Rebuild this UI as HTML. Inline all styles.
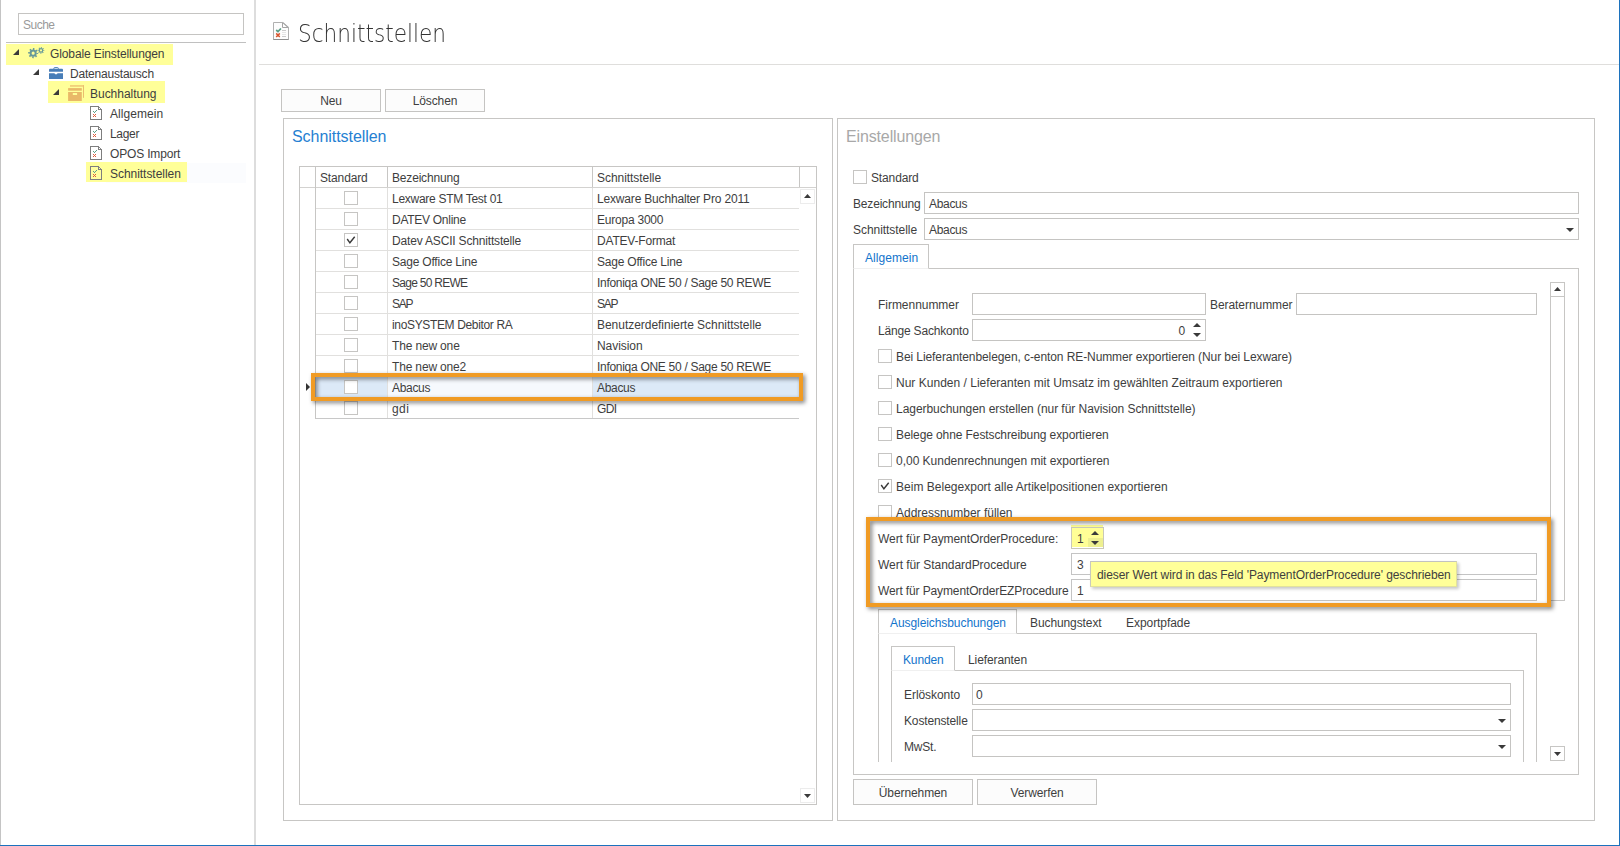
<!DOCTYPE html>
<html lang="de">
<head>
<meta charset="utf-8">
<title>Schnittstellen</title>
<style>
html,body{margin:0;padding:0;}
body{width:1620px;height:846px;overflow:hidden;background:#fff;position:relative;
  font-family:"Liberation Sans",sans-serif;font-size:12px;color:#333;}
#app{position:absolute;left:0;top:0;width:1620px;height:846px;overflow:hidden;background:#fff;}
#app *{box-sizing:border-box;}
.a{position:absolute;}
.t{position:absolute;white-space:nowrap;line-height:16px;height:16px;font-size:12px;color:#3e3e3e;letter-spacing:-0.1px;}
.ln{position:absolute;background:#c7c6c4;}
.rl{left:316px;width:483px;height:1px;background:#e1e0de;}
.box{position:absolute;border:1px solid #c7c6c4;background:#fff;}
.inp{position:absolute;border:1px solid #c5c4c2;background:#fff;height:22px;}
.btn{position:absolute;border:1px solid #c5c4c2;background:#fcfcfc;height:23px;text-align:center;line-height:23px;font-size:12px;color:#3e3e3e;letter-spacing:-0.1px;}
.cb{position:absolute;width:14px;height:14px;border:1px solid #c6c5c3;background:#fff;}
.hl{position:absolute;background:#ffff99;}
.blue{color:#1274cc;}
svg{position:absolute;overflow:visible;}
.tri{position:absolute;width:0;height:0;}
.frame{position:absolute;border:4px solid #f09b24;filter:drop-shadow(2px 2px 2px rgba(0,0,0,0.5));}
</style>
</head>
<body>
<div id="app">

<!-- ===== window edges ===== -->
<div class="a" style="left:0;top:0;width:1px;height:846px;background:#c4c4c4;"></div>
<div class="a" style="left:1619px;top:0;width:1px;height:846px;background:#1c72bd;"></div>
<div class="a" style="left:0;top:845px;width:1620px;height:1px;background:#1c72bd;"></div>

<!-- ===== left navigation ===== -->
<div id="nav">
  <div class="inp" style="left:18px;top:13px;width:226px;height:22px;"></div>
  <div class="t" style="left:23px;top:17px;color:#9a9a9a;letter-spacing:-0.506px;">Suche</div>
  <div class="ln" style="left:6px;top:42px;width:240px;height:1px;background:#c0c0c0;"></div>

  <div class="hl" style="left:6px;top:44px;width:167px;height:21px;"></div>
  <div class="hl" style="left:48px;top:81px;width:117px;height:22px;"></div>
  <div class="a" style="left:106px;top:163px;width:140px;height:20px;background:#fbfcfe;"></div>
  <div class="hl" style="left:86px;top:162px;width:101px;height:20px;"></div>

  <!-- expander arrows -->
  <svg style="left:13px;top:49px;" width="6" height="6" viewBox="0 0 6 6"><path d="M6 0 L6 6 L0 6 Z" fill="#3a3a3a"/></svg>
  <svg style="left:33px;top:69px;" width="6" height="6" viewBox="0 0 6 6"><path d="M6 0 L6 6 L0 6 Z" fill="#3a3a3a"/></svg>
  <svg style="left:53px;top:89px;" width="6" height="6" viewBox="0 0 6 6"><path d="M6 0 L6 6 L0 6 Z" fill="#3a3a3a"/></svg>

  <!-- gears icon -->
  <svg style="left:28px;top:46px;" width="17" height="14" viewBox="0 0 17 14">
    <g fill="none" stroke="#66999a">
      <circle cx="5.15" cy="7.15" r="4.1" stroke-width="1.9" stroke-dasharray="1.45 1.77" stroke-dashoffset="0.72"/>
      <circle cx="5.15" cy="7.15" r="2.55" stroke-width="2"/>
      <circle cx="13" cy="4.4" r="2.65" stroke-width="1.3" stroke-dasharray="0.95 1.131" stroke-dashoffset="0.47"/>
      <circle cx="13" cy="4.4" r="1.7" stroke-width="1.2"/>
    </g>
  </svg>

  <!-- briefcase icon -->
  <svg style="left:49px;top:67px;" width="14" height="12" viewBox="0 0 14 12">
    <path d="M4.9 2 V1.3 Q4.9 0.6 5.6 0.6 H8.6 Q9.3 0.6 9.3 1.3 V2" fill="none" stroke="#487eb8" stroke-width="1"/>
    <path d="M0 2.7 Q0 1.7 1 1.7 H13 Q14 1.7 14 2.7 V4.8 H0 Z" fill="#487eb8"/>
    <path d="M0 6.2 H5.4 L6.2 7.2 H7.8 L8.6 6.2 H14 V12 H0 Z" fill="#487eb8"/>
  </svg>

  <!-- archive box icon -->
  <svg style="left:68px;top:85px;" width="16" height="16" viewBox="0 0 16 16">
    <path d="M2 0.95 H16" fill="none" stroke="#ebbd6e" stroke-width="1.3"/>
    <path d="M15.5 0.3 V12.8" fill="none" stroke="#ebbd6e" stroke-width="1"/>
    <rect x="0.1" y="3.1" width="13.7" height="2.6" fill="#e9b968"/>
    <path d="M0.1 7.1 H13.8 V15.9 H0.1 Z M4.8 8.1 V10 H9.1 V8.1 Z" fill="#e9b968" fill-rule="evenodd"/>
  </svg>

  <!-- document icons -->
  <svg style="left:90px;top:106px;" width="12" height="14" viewBox="0 0 12 14" shape-rendering="crispEdges">
    <path d="M0 0 H9 L12 3 V14 H0 Z" fill="#fff"/>
    <path d="M0 0 H9 V1 H1 V13 H11 V4 H8 V0 H9 V3 H12 V14 H0 Z" fill="#7e7e7e"/>
    <path d="M9 1 H10 V2 H9 Z M10 2 H11 V3 H10 Z" fill="#8a8a8a"/>
    <path d="M3 5 H4 V6 H3 Z M4 6 H5 V7 H4 Z M5 5 H6 V6 H5 Z M6 4 H7 V5 H6 Z" fill="#5aa088"/>
    <path d="M3 8 H4 V9 H3 Z M5 8 H6 V9 H5 Z M4 9 H5 V10 H4 Z M3 10 H4 V11 H3 Z M5 10 H6 V11 H5 Z" fill="#dc5a38"/>
  </svg>
  <svg style="left:90px;top:126px;" width="12" height="14" viewBox="0 0 12 14" shape-rendering="crispEdges">
    <path d="M0 0 H9 L12 3 V14 H0 Z" fill="#fff"/>
    <path d="M0 0 H9 V1 H1 V13 H11 V4 H8 V0 H9 V3 H12 V14 H0 Z" fill="#7e7e7e"/>
    <path d="M9 1 H10 V2 H9 Z M10 2 H11 V3 H10 Z" fill="#8a8a8a"/>
    <path d="M3 5 H4 V6 H3 Z M4 6 H5 V7 H4 Z M5 5 H6 V6 H5 Z M6 4 H7 V5 H6 Z" fill="#5aa088"/>
    <path d="M3 8 H4 V9 H3 Z M5 8 H6 V9 H5 Z M4 9 H5 V10 H4 Z M3 10 H4 V11 H3 Z M5 10 H6 V11 H5 Z" fill="#dc5a38"/>
  </svg>
  <svg style="left:90px;top:146px;" width="12" height="14" viewBox="0 0 12 14" shape-rendering="crispEdges">
    <path d="M0 0 H9 L12 3 V14 H0 Z" fill="#fff"/>
    <path d="M0 0 H9 V1 H1 V13 H11 V4 H8 V0 H9 V3 H12 V14 H0 Z" fill="#7e7e7e"/>
    <path d="M9 1 H10 V2 H9 Z M10 2 H11 V3 H10 Z" fill="#8a8a8a"/>
    <path d="M3 5 H4 V6 H3 Z M4 6 H5 V7 H4 Z M5 5 H6 V6 H5 Z M6 4 H7 V5 H6 Z" fill="#5aa088"/>
    <path d="M3 8 H4 V9 H3 Z M5 8 H6 V9 H5 Z M4 9 H5 V10 H4 Z M3 10 H4 V11 H3 Z M5 10 H6 V11 H5 Z" fill="#dc5a38"/>
  </svg>
  <svg style="left:90px;top:166px;" width="12" height="14" viewBox="0 0 12 14" shape-rendering="crispEdges">
    <path d="M0 0 H9 L12 3 V14 H0 Z" fill="#ffffa0"/>
    <path d="M0 0 H9 V1 H1 V13 H11 V4 H8 V0 H9 V3 H12 V14 H0 Z" fill="#7e7e7e"/>
    <path d="M9 1 H10 V2 H9 Z M10 2 H11 V3 H10 Z" fill="#8a8a8a"/>
    <path d="M3 5 H4 V6 H3 Z M4 6 H5 V7 H4 Z M5 5 H6 V6 H5 Z M6 4 H7 V5 H6 Z" fill="#5aa088"/>
    <path d="M3 8 H4 V9 H3 Z M5 8 H6 V9 H5 Z M4 9 H5 V10 H4 Z M3 10 H4 V11 H3 Z M5 10 H6 V11 H5 Z" fill="#dc5a38"/>
  </svg>

  <div class="t" style="left:50px;top:46px;letter-spacing:-0.111px;">Globale Einstellungen</div>
  <div class="t" style="left:70px;top:66px;letter-spacing:-0.203px;">Datenaustausch</div>
  <div class="t" style="left:90px;top:86px;letter-spacing:-0.025px;">Buchhaltung</div>
  <div class="t" style="left:110px;top:106px;letter-spacing:0.056px;">Allgemein</div>
  <div class="t" style="left:110px;top:126px;letter-spacing:-0.321px;">Lager</div>
  <div class="t" style="left:110px;top:146px;letter-spacing:-0.164px;">OPOS Import</div>
  <div class="t" style="left:110px;top:166px;letter-spacing:-0.042px;">Schnittstellen</div>
</div>
<div class="ln" style="left:254px;top:0;width:2px;height:845px;background:#dddddd;"></div>

<!-- ===== page header ===== -->
<svg style="left:273px;top:22px;" width="16" height="18" viewBox="0 0 16 18">
  <path d="M0.5 0.5 H9.7 L15.5 5.6 V17.5 H0.5 Z" fill="#fdfdfd" stroke="#b0b0b0" stroke-width="1"/>
  <path d="M9.5 0.5 V5.5 H15.5" fill="none" stroke="#a4a4a4" stroke-width="1"/>
  <path d="M9.8 0.6 L15.4 5.5" fill="none" stroke="#a8a8a8" stroke-width="1.1"/>
  <path d="M0.4 17.5 H15.6" fill="none" stroke="#8e8e8e" stroke-width="1"/>
  <path d="M3.2 8 L5 9.6 L7.9 6.5" fill="none" stroke="#5a9d86" stroke-width="1.7"/>
  <path d="M3.2 11.4 L6.8 15 M6.8 11.4 L3.2 15" fill="none" stroke="#d9562f" stroke-width="1.5"/>
  <path d="M9 8.5 H13 M9 14.5 H13" fill="none" stroke="#cacaca" stroke-width="1"/>
  <path d="M9 10.5 H13 M9 12.5 H13" fill="none" stroke="#e6e6e6" stroke-width="1"/>
</svg>
<div class="a" id="title" style="left:297.5px;top:16px;font-family:'DejaVu Sans Light','DejaVu Sans',sans-serif;font-weight:200;font-size:24.8px;line-height:36px;color:#343434;white-space:nowrap;transform-origin:0 0;transform:scaleX(0.872);">Schnittstellen</div>
<div class="ln" style="left:259px;top:64px;width:1360px;height:1px;background:#dfdedc;"></div>

<div class="btn" style="left:281px;top:89px;width:100px;">Neu</div>
<div class="btn" style="left:385px;top:89px;width:100px;">Löschen</div>

<!-- ===== left group: Schnittstellen ===== -->
<div class="box" id="g1" style="left:283px;top:118px;width:550px;height:703px;"></div>
<div class="a" style="color:#2580d2;left:292px;top:126px;font-size:16px;line-height:22px;white-space:nowrap;letter-spacing:-0.05px;">Schnittstellen</div>

<div id="grid">
<div class="box" style="left:299px;top:166px;width:518px;height:639px;"></div>
<!-- selected row background -->
<div class="a" style="left:316px;top:377px;width:483px;height:20px;background:#dce9f7;"></div>
<div class="a" style="left:388px;top:377px;width:204px;height:20px;background:#f6f9fd;"></div>
<!-- header -->
<div class="ln" style="left:300px;top:187px;width:516px;height:1px;background:#d3d2d0;"></div>
<div class="ln" style="left:315px;top:167px;width:1px;height:252px;"></div>
<div class="ln" style="left:387px;top:167px;width:1px;height:20px;"></div>
<div class="ln" style="left:592px;top:167px;width:1px;height:20px;"></div>
<div class="ln" style="left:799px;top:167px;width:1px;height:20px;"></div>
<div class="ln" style="left:387px;top:188px;width:1px;height:230px;background:#e1e0de;"></div>
<div class="ln" style="left:592px;top:188px;width:1px;height:230px;background:#e1e0de;"></div>
<div class="t" style="left:320px;top:170px;letter-spacing:-0.134px;">Standard</div>
<div class="t" style="left:392px;top:170px;letter-spacing:-0.181px;">Bezeichnung</div>
<div class="t" style="left:597px;top:170px;letter-spacing:-0.053px;">Schnittstelle</div>

<svg style="left:306px;top:383px;" width="4" height="8" viewBox="0 0 4 8"><path d="M0 0 L4 4 L0 8 Z" fill="#333"/></svg>

<!-- rows -->
<div class="ln rl" style="top:208px;"></div>
<div class="cb" style="left:344px;top:191px;"></div>
<div class="t" style="left:392px;top:191px;letter-spacing:-0.283px;">Lexware STM Test 01</div>
<div class="t" style="left:597px;top:191px;letter-spacing:-0.175px;">Lexware Buchhalter Pro 2011</div>
<div class="ln rl" style="top:229px;"></div>
<div class="cb" style="left:344px;top:212px;"></div>
<div class="t" style="left:392px;top:212px;letter-spacing:-0.276px;">DATEV Online</div>
<div class="t" style="left:597px;top:212px;letter-spacing:-0.225px;">Europa 3000</div>
<div class="ln rl" style="top:250px;"></div>
<div class="cb" style="left:344px;top:233px;"></div>
<svg style="left:344px;top:233px;" width="14" height="14" viewBox="0 0 14 14"><path d="M3.2 6 L5.9 9.8 L10.7 3.8" fill="none" stroke="#3a3a3a" stroke-width="1.4"/></svg>
<div class="t" style="left:392px;top:233px;letter-spacing:-0.174px;">Datev ASCII Schnittstelle</div>
<div class="t" style="left:597px;top:233px;letter-spacing:-0.185px;">DATEV-Format</div>
<div class="ln rl" style="top:271px;"></div>
<div class="cb" style="left:344px;top:254px;"></div>
<div class="t" style="left:392px;top:254px;letter-spacing:-0.209px;">Sage Office Line</div>
<div class="t" style="left:597px;top:254px;letter-spacing:-0.209px;">Sage Office Line</div>
<div class="ln rl" style="top:292px;"></div>
<div class="cb" style="left:344px;top:275px;"></div>
<div class="t" style="left:392px;top:275px;letter-spacing:-0.721px;">Sage 50 REWE</div>
<div class="t" style="left:597px;top:275px;letter-spacing:-0.290px;">Infoniqa ONE 50 / Sage 50 REWE</div>
<div class="ln rl" style="top:313px;"></div>
<div class="cb" style="left:344px;top:296px;"></div>
<div class="t" style="left:392px;top:296px;letter-spacing:-1.274px;">SAP</div>
<div class="t" style="left:597px;top:296px;letter-spacing:-1.274px;">SAP</div>
<div class="ln rl" style="top:334px;"></div>
<div class="cb" style="left:344px;top:317px;"></div>
<div class="t" style="left:392px;top:317px;letter-spacing:-0.347px;">inoSYSTEM Debitor RA</div>
<div class="t" style="left:597px;top:317px;letter-spacing:-0.032px;">Benutzerdefinierte Schnittstelle</div>
<div class="ln rl" style="top:355px;"></div>
<div class="cb" style="left:344px;top:338px;"></div>
<div class="t" style="left:392px;top:338px;letter-spacing:-0.158px;">The new one</div>
<div class="t" style="left:597px;top:338px;letter-spacing:-0.064px;">Navision</div>
<div class="ln rl" style="top:376px;"></div>
<div class="cb" style="left:344px;top:359px;"></div>
<div class="t" style="left:392px;top:359px;letter-spacing:-0.162px;">The new one2</div>
<div class="t" style="left:597px;top:359px;letter-spacing:-0.290px;">Infoniqa ONE 50 / Sage 50 REWE</div>
<div class="ln rl" style="top:397px;"></div>
<div class="cb" style="left:344px;top:380px;"></div>
<div class="t" style="left:392px;top:380px;letter-spacing:-0.311px;">Abacus</div>
<div class="t" style="left:597px;top:380px;letter-spacing:-0.311px;">Abacus</div>
<div class="ln rl" style="top:418px;background:#c8c8c8;"></div>
<div class="cb" style="left:344px;top:401px;"></div>
<div class="t" style="left:392px;top:401px;letter-spacing:0.401px;">gdi</div>
<div class="t" style="left:597px;top:401px;letter-spacing:-0.598px;">GDI</div>

<!-- grid scrollbar buttons -->
<div class="a" style="left:800px;top:189px;width:15px;height:15px;border:1px solid #ececec;"></div>
<svg style="left:804px;top:194px;" width="7" height="4" viewBox="0 0 7 4"><path d="M0 4 L3.5 0 L7 4 Z" fill="#3a3a3a"/></svg>
<div class="a" style="left:800px;top:788px;width:15px;height:15px;border:1px solid #ececec;"></div>
<svg style="left:804px;top:794px;" width="7" height="4" viewBox="0 0 7 4"><path d="M0 0 L3.5 4 L7 0 Z" fill="#3a3a3a"/></svg>

<!-- orange highlight frame around selected row -->
<div class="frame" style="left:311px;top:373px;width:492px;height:28px;"></div>
</div>

<!-- ===== right group: Einstellungen ===== -->
<div class="box" id="g2" style="left:837px;top:118px;width:758px;height:703px;"></div>
<div class="a" style="left:846px;top:126px;font-size:16px;line-height:22px;white-space:nowrap;color:#a8a8a8;letter-spacing:-0.14px;">Einstellungen</div>

<div class="cb" style="left:853px;top:170px;"></div>
<div class="t" style="left:871px;top:170px;letter-spacing:-0.134px;">Standard</div>
<div class="t" style="left:853px;top:196px;letter-spacing:-0.181px;">Bezeichnung</div>
<div class="inp" style="left:924px;top:192px;width:655px;"></div>
<div class="t" style="left:929px;top:196px;letter-spacing:-0.311px;">Abacus</div>
<div class="t" style="left:853px;top:222px;letter-spacing:-0.053px;">Schnittstelle</div>
<div class="inp" style="left:924px;top:218px;width:655px;"></div>
<div class="t" style="left:929px;top:222px;letter-spacing:-0.311px;">Abacus</div>
<svg style="left:1566px;top:228px;" width="8" height="4" viewBox="0 0 8 4"><path d="M0 0 L4 4 L8 0 Z" fill="#3a3a3a"/></svg>

<!-- outer tab control -->
<div class="box" style="left:853px;top:268px;width:726px;height:507px;"></div>
<div class="a" style="left:853px;top:244px;width:76px;height:25px;border:1px solid #c7c6c4;border-bottom:1px solid #f0f0f0;background:#fff;"></div>
<div class="t blue" style="left:865px;top:250px;letter-spacing:0.056px;">Allgemein</div>

<!-- scrollable content (clipped at y=762) -->
<div class="a" id="scroll" style="left:854px;top:269px;width:724px;height:493px;overflow:hidden;">
 <div class="a" style="left:-854px;top:-269px;width:1620px;height:846px;">

  <div class="t" style="left:878px;top:297px;letter-spacing:-0.034px;">Firmennummer</div>
  <div class="inp" style="left:972px;top:293px;width:234px;"></div>
  <div class="t" style="left:1210px;top:297px;letter-spacing:-0.063px;">Beraternummer</div>
  <div class="inp" style="left:1296px;top:293px;width:241px;"></div>
  <div class="t" style="left:878px;top:323px;letter-spacing:-0.180px;">Länge Sachkonto</div>
  <div class="inp" style="left:972px;top:319px;width:234px;"></div>
  <div class="t" style="left:1099px;top:323px;width:86px;text-align:right;">0</div>
  <svg style="left:1193px;top:323px;" width="8" height="14" viewBox="0 0 8 14"><path d="M0 3.9 L4 0 L8 3.9 Z M0 10 L4 13.9 L8 10 Z" fill="#3a3a3a"/></svg>

  <div class="cb" style="left:878px;top:349px;"></div>
  <div class="t" style="left:896px;top:349px;letter-spacing:-0.088px;">Bei Lieferantenbelegen, c-enton RE-Nummer exportieren (Nur bei Lexware)</div>
  <div class="cb" style="left:878px;top:375px;"></div>
  <div class="t" style="left:896px;top:375px;letter-spacing:0.015px;">Nur Kunden / Lieferanten mit Umsatz im gewählten Zeitraum exportieren</div>
  <div class="cb" style="left:878px;top:401px;"></div>
  <div class="t" style="left:896px;top:401px;letter-spacing:-0.047px;">Lagerbuchungen erstellen (nur für Navision Schnittstelle)</div>
  <div class="cb" style="left:878px;top:427px;"></div>
  <div class="t" style="left:896px;top:427px;letter-spacing:-0.094px;">Belege ohne Festschreibung exportieren</div>
  <div class="cb" style="left:878px;top:453px;"></div>
  <div class="t" style="left:896px;top:453px;letter-spacing:-0.017px;">0,00 Kundenrechnungen mit exportieren</div>
  <div class="cb" style="left:878px;top:479px;"></div>
  <svg style="left:878px;top:479px;" width="14" height="14" viewBox="0 0 14 14"><path d="M3.2 6 L5.9 9.8 L10.7 3.8" fill="none" stroke="#3a3a3a" stroke-width="1.4"/></svg>
  <div class="t" style="left:896px;top:479px;letter-spacing:0.016px;">Beim Belegexport alle Artikelpositionen exportieren</div>
  <div class="cb" style="left:878px;top:505px;"></div>
  <div class="t" style="left:896px;top:505px;letter-spacing:-0.010px;">Addressnumber füllen</div>

  <div class="t" style="left:878px;top:531px;letter-spacing:-0.074px;">Wert für PaymentOrderProcedure:</div>
  <div class="hl" style="left:1071px;top:525px;width:32px;height:22px;background:#ffff96;"></div>
  <div class="a" style="left:1088px;top:538px;width:15px;height:9px;background:#eef090;"></div>
  <div class="inp" style="left:1071px;top:527px;width:33px;border-color:#c9c8b8;background:transparent;"></div>
  <div class="t" style="left:1077px;top:531px;">1</div>
  <svg style="left:1091px;top:531px;" width="8" height="14" viewBox="0 0 8 14"><path d="M0 3.9 L4 0 L8 3.9 Z M0 10 L4 13.9 L8 10 Z" fill="#3a3a3a"/></svg>

  <div class="t" style="left:878px;top:557px;letter-spacing:-0.049px;">Wert für StandardProcedure</div>
  <div class="inp" style="left:1071px;top:553px;width:466px;border-color:#c4c4c4;"></div>
  <div class="t" style="left:1077px;top:557px;">3</div>
  <div class="t" style="left:878px;top:583px;letter-spacing:-0.125px;">Wert für PaymentOrderEZProcedure</div>
  <div class="inp" style="left:1071px;top:579px;width:466px;border-color:#c4c4c4;"></div>
  <div class="t" style="left:1077px;top:583px;">1</div>

  <!-- inner tab control -->
  <div class="box" style="left:878px;top:633px;width:659px;height:200px;"></div>
  <div class="a" style="left:878px;top:609px;width:139px;height:25px;border:1px solid #c7c6c4;border-bottom:1px solid #f0f0f0;background:#fff;"></div>
  <div class="t blue" style="left:890px;top:615px;letter-spacing:-0.077px;">Ausgleichsbuchungen</div>
  <div class="t" style="left:1030px;top:615px;letter-spacing:-0.097px;">Buchungstext</div>
  <div class="t" style="left:1126px;top:615px;letter-spacing:-0.055px;">Exportpfade</div>

  <!-- inner-inner tab control -->
  <div class="box" style="left:891px;top:670px;width:633px;height:200px;"></div>
  <div class="a" style="left:891px;top:646px;width:64px;height:25px;border:1px solid #c7c6c4;border-bottom:1px solid #f0f0f0;background:#fff;"></div>
  <div class="t blue" style="left:903px;top:652px;letter-spacing:-0.134px;">Kunden</div>
  <div class="t" style="left:968px;top:652px;letter-spacing:-0.097px;">Lieferanten</div>

  <div class="t" style="left:904px;top:687px;letter-spacing:-0.060px;">Erlöskonto</div>
  <div class="inp" style="left:972px;top:683px;width:539px;"></div>
  <div class="t" style="left:976px;top:687px;">0</div>
  <div class="t" style="left:904px;top:713px;letter-spacing:-0.143px;">Kostenstelle</div>
  <div class="inp" style="left:972px;top:709px;width:539px;"></div>
  <svg style="left:1498px;top:719px;" width="8" height="4" viewBox="0 0 8 4"><path d="M0 0 L4 4 L8 0 Z" fill="#3a3a3a"/></svg>
  <div class="t" style="left:904px;top:739px;letter-spacing:-0.189px;">MwSt.</div>
  <div class="inp" style="left:972px;top:735px;width:539px;"></div>
  <svg style="left:1498px;top:745px;" width="8" height="4" viewBox="0 0 8 4"><path d="M0 0 L4 4 L8 0 Z" fill="#3a3a3a"/></svg>

  <!-- vertical scrollbar -->
  <div class="a" style="left:1550px;top:282px;width:15px;height:319px;border:1px solid #c7c6c4;background:#fff;"></div>
  <div class="ln" style="left:1551px;top:296px;width:13px;height:1px;"></div>
  <svg style="left:1554px;top:287px;" width="7" height="4" viewBox="0 0 7 4"><path d="M0 4 L3.5 0 L7 4 Z" fill="#3a3a3a"/></svg>
  <div class="a" style="left:1550px;top:746px;width:15px;height:15px;border:1px solid #c7c6c4;background:#fff;"></div>
  <svg style="left:1554px;top:752px;" width="7" height="4" viewBox="0 0 7 4"><path d="M0 0 L3.5 4 L7 0 Z" fill="#3a3a3a"/></svg>
 </div>
</div>

<!-- orange highlight frame around procedure values -->
<div class="frame" style="left:866px;top:517px;width:685px;height:90px;"></div>

<!-- tooltip -->
<div class="a" style="left:1090px;top:561px;width:367px;height:26px;background:#ffff99;border:1px solid #e2e29c;border-top-color:#c2c2c0;border-left-color:#c8c8c0;box-shadow:2px 2px 3px rgba(0,0,0,0.22);"></div>
<div class="t" style="left:1097px;top:567px;letter-spacing:-0.075px;">dieser Wert wird in das Feld 'PaymentOrderProcedure' geschrieben</div>

<div class="btn" style="left:853px;top:779px;width:120px;height:26px;line-height:26px;">Übernehmen</div>
<div class="btn" style="left:977px;top:779px;width:120px;height:26px;line-height:26px;">Verwerfen</div>

</div>
</body>
</html>
